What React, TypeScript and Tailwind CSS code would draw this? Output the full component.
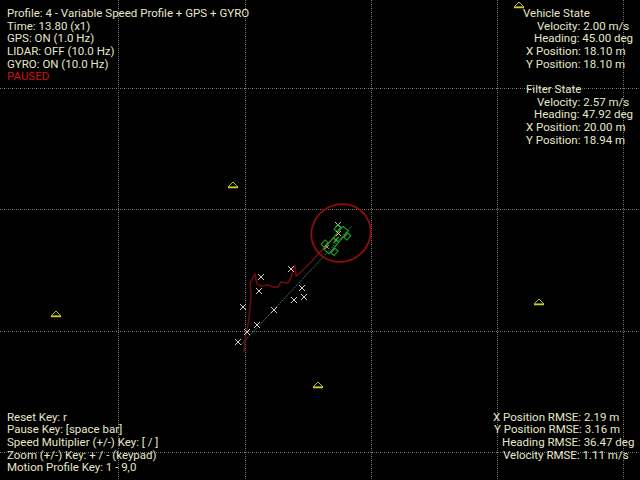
import React from 'react';

const gridX = [118, 245, 371, 497, 623];
const gridY = [88, 209, 331, 452];

const landmarks = [
  [233, 184],
  [56, 313],
  [539, 301],
  [318, 384],
  [519, 4],
];

const gpsMarks = [
  [338, 225],
  [291, 269],
  [261, 277],
  [259, 291],
  [302, 288],
  [304, 297],
  [294, 300],
  [274, 310],
  [243, 307],
  [257, 325],
  [247, 332],
  [238, 342],
];

function Canvas() {
  return (
    <svg className="absolute inset-0" width={640} height={480} viewBox="0 0 640 480">
      {/* grid */}
      {gridX.map((x) => (
        <g key={'x' + x}>
          <line x1={x + 0.5} y1={0} x2={x + 0.5} y2={480} stroke="#8c8c3c" strokeDasharray="1 3" />
          <line x1={x + 0.5} y1={2} x2={x + 0.5} y2={480} stroke="#4a4a8c" strokeDasharray="1 3" />
        </g>
      ))}
      {gridY.map((y) => (
        <g key={'y' + y}>
          <line x1={0} y1={y + 0.5} x2={640} y2={y + 0.5} stroke="#8c8c3c" strokeDasharray="1 3" />
          <line x1={2} y1={y + 0.5} x2={640} y2={y + 0.5} stroke="#4a4a8c" strokeDasharray="1 3" />
        </g>
      ))}

      {/* landmarks */}
      {landmarks.map(([x, y]) => (
        <g key={x + '-' + y}>
          <polygon points={`${x - 5},${y + 3} ${x},${y - 2} ${x + 5},${y + 3}`} fill="none" stroke="#b8b818" strokeWidth={1} />
          <line x1={x - 5} y1={y + 3.5} x2={x + 5} y2={y + 3.5} stroke="#d0d020" strokeWidth={1.5} />
        </g>
      ))}

      {/* ground truth path */}
      <line x1={241} y1={345} x2={352} y2={226} stroke="#2c7a6a" strokeWidth={1} strokeDasharray="2 1" />

      {/* estimated path */}
      <polyline
        points="244,352 245,340 247,330 249,318 250,306 251,296 250,283 255,274 257,284 262,286 268,285 273,287 278,287 281,282 288,283 291,278 293,270 295,265 296,276 300,273 306,267 312,261 320,252 328,243 336,236"
        fill="none"
        stroke="#6e0c0c"
        strokeWidth={1.5}
      />

      {/* covariance ellipse */}
      <ellipse cx={341} cy={233} rx={30} ry={28.5} transform="rotate(-30 341 233)" fill="none" stroke="#900c0c" strokeWidth={1.8} />

      {/* gps measurements */}
      {gpsMarks.map(([x, y]) => (
        <g key={'g' + x + '-' + y} stroke="#cfcfc0" strokeWidth={1}>
          <line x1={x - 3} y1={y - 3} x2={x + 3} y2={y + 3} />
          <line x1={x - 3} y1={y + 3} x2={x + 3} y2={y - 3} />
        </g>
      ))}

      {/* vehicle */}
      <g transform="translate(336 240) rotate(-50)" fill="none" stroke="#22b022" strokeWidth={1}>
        <rect x={-15} y={-3.5} width={30} height={7} />
        <rect x={-13} y={-8.5} width={6} height={4} />
        <rect x={7} y={-8.5} width={6} height={4} />
        <rect x={-13} y={4.5} width={6} height={4} />
        <rect x={7} y={4.5} width={6} height={4} />
        <line x1={-4} y1={0} x2={4} y2={0} stroke="#30e030" />
        <line x1={0} y1={-3} x2={0} y2={3} stroke="#30e030" />
      </g>
      <g stroke="#e0c040" strokeWidth={1}>
        <line x1={336} y1={231} x2={341} y2={236} />
        <line x1={336} y1={236} x2={341} y2={231} />
      </g>
      <g stroke="#c08060" strokeWidth={1}>
        <line x1={325} y1={245} x2={329} y2={249} />
        <line x1={325} y1={249} x2={329} y2={245} />
      </g>
    </svg>
  );
}

export default function App() {
  return (
    <div
      className="relative w-[640px] h-[480px] bg-black overflow-hidden whitespace-nowrap text-[11.5px] leading-[12.66px] text-[#e6e6c8]"
      style={{ fontFamily: 'Roboto, "Liberation Sans", sans-serif' }}
    >
      <Canvas />
      <div className="relative flex flex-col justify-between h-full pt-[7px] pb-[6px]">
        <div className="flex justify-between">
          <div className="pl-[7px] flex flex-col">
            <div>Profile: 4 - Variable Speed Profile + GPS + GYRO</div>
            <div>Time: 13.80 (x1)</div>
            <div>GPS: ON (1.0 Hz)</div>
            <div>LIDAR: OFF (10.0 Hz)</div>
            <div>GYRO: ON (10.0 Hz)</div>
            <div className="text-[#d01010]">PAUSED</div>
          </div>
          <div className="w-[117px] flex flex-col">
            <div>Vehicle State</div>
            <div className="pl-[14px]">Velocity: 2.00 m/s</div>
            <div className="pl-[11px]">Heading: 45.00 deg</div>
            <div className="pl-[3px]">X Position: 18.10 m</div>
            <div className="pl-[3px]">Y Position: 18.10 m</div>
            <div className="h-[12.66px]" />
            <div className="pl-[3px]">Filter State</div>
            <div className="pl-[14px]">Velocity: 2.57 m/s</div>
            <div className="pl-[11px]">Heading: 47.92 deg</div>
            <div className="pl-[3px]">X Position: 20.00 m</div>
            <div className="pl-[3px]">Y Position: 18.94 m</div>
          </div>
        </div>
        <div className="flex justify-between items-end">
          <div className="pl-[7px] flex flex-col">
            <div>Reset Key: r</div>
            <div>Pause Key: [space bar]</div>
            <div>Speed Multiplier (+/-) Key: [ / ]</div>
            <div>Zoom (+/-) Key: + / - (keypad)</div>
            <div>Motion Profile Key: 1 - 9,0</div>
          </div>
          <div className="w-[147px] flex flex-col pb-[12.66px]">
            <div>X Position RMSE: 2.19 m</div>
            <div className="pl-[1px]">Y Position RMSE: 3.16 m</div>
            <div className="pl-[9px]">Heading RMSE: 36.47 deg</div>
            <div className="pl-[10px]">Velocity RMSE: 1.11 m/s</div>
          </div>
        </div>
      </div>
    </div>
  );
}
